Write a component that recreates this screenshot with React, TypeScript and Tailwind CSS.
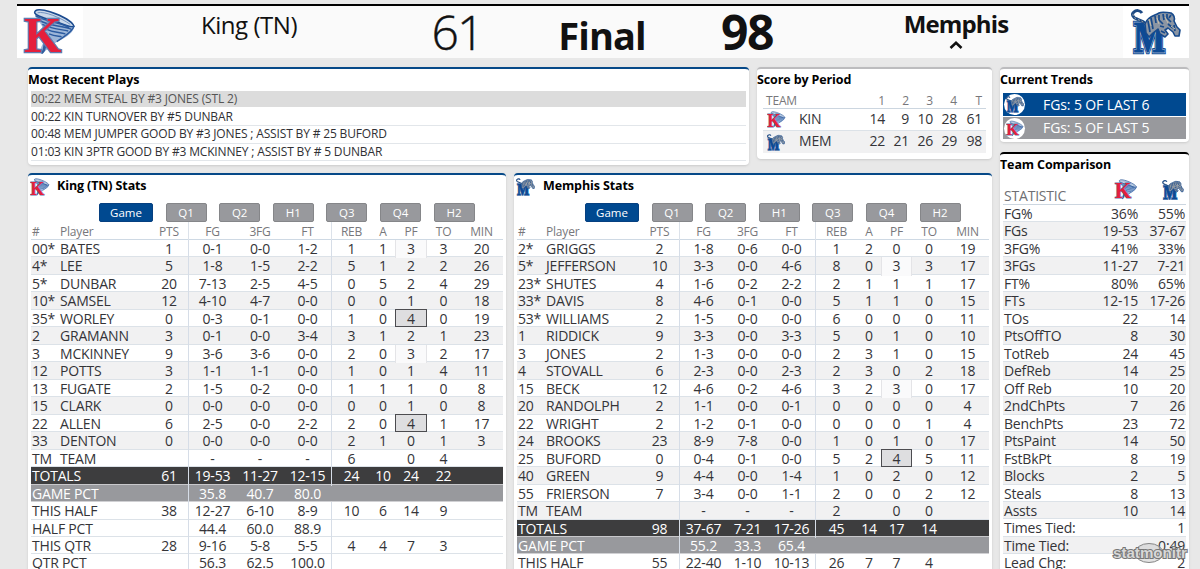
import clsx from 'clsx';
import type { ReactNode } from 'react';

const LEFT_COLS = 'grid-cols-[29px_90px_38px_48px_48px_47px_40px_24px_32px_33px_43px]';
const RIGHT_COLS = 'grid-cols-[29px_94px_39px_48px_41px_47px_42px_24px_31px_34px_43px]';

const HEADINGS = ['#', 'Player', 'PTS', 'FG', '3FG', 'FT', 'REB', 'A', 'PF', 'TO', 'MIN'];
const PERIODS = ['Q1', 'Q2', 'H1', 'Q3', 'Q4', 'H2'];

const kingPlayers = [
  ['00*', 'BATES', '1', '0-1', '0-0', '1-2', '1', '1', '3', '3', '20'],
  ['4*', 'LEE', '5', '1-8', '1-5', '2-2', '5', '1', '2', '2', '26'],
  ['5*', 'DUNBAR', '20', '7-13', '2-5', '4-5', '0', '5', '2', '4', '29'],
  ['10*', 'SAMSEL', '12', '4-10', '4-7', '0-0', '0', '0', '1', '0', '18'],
  ['35*', 'WORLEY', '0', '0-3', '0-1', '0-0', '1', '0', '4', '0', '19'],
  ['2', 'GRAMANN', '3', '0-1', '0-0', '3-4', '3', '1', '2', '1', '23'],
  ['3', 'MCKINNEY', '9', '3-6', '3-6', '0-0', '2', '0', '3', '2', '17'],
  ['12', 'POTTS', '3', '1-1', '1-1', '0-0', '1', '0', '1', '4', '11'],
  ['13', 'FUGATE', '2', '1-5', '0-2', '0-0', '1', '1', '1', '0', '8'],
  ['15', 'CLARK', '0', '0-0', '0-0', '0-0', '0', '0', '1', '0', '8'],
  ['22', 'ALLEN', '6', '2-5', '0-0', '2-2', '2', '0', '4', '1', '17'],
  ['33', 'DENTON', '0', '0-0', '0-0', '0-0', '2', '1', '0', '1', '3'],
  ['TM', 'TEAM', '', '-', '-', '-', '6', '', '0', '4', ''],
];

const kingTotals = [
  ['TOTALS', '61', '19-53', '11-27', '12-15', '24', '10', '24', '22', ''],
  ['GAME PCT', '', '35.8', '40.7', '80.0', '', '', '', '', ''],
  ['THIS HALF', '38', '12-27', '6-10', '8-9', '10', '6', '14', '9', ''],
  ['HALF PCT', '', '44.4', '60.0', '88.9', '', '', '', '', ''],
  ['THIS QTR', '28', '9-16', '5-8', '5-5', '4', '4', '7', '3', ''],
  ['QTR PCT', '', '56.3', '62.5', '100.0', '', '', '', '', ''],
];

const memphisPlayers = [
  ['2*', 'GRIGGS', '2', '1-8', '0-6', '0-0', '1', '2', '0', '0', '19'],
  ['5*', 'JEFFERSON', '10', '3-3', '0-0', '4-6', '8', '0', '3', '3', '17'],
  ['23*', 'SHUTES', '4', '1-6', '0-2', '2-2', '2', '1', '1', '1', '17'],
  ['33*', 'DAVIS', '8', '4-6', '0-1', '0-0', '5', '1', '1', '0', '15'],
  ['53*', 'WILLIAMS', '2', '1-5', '0-0', '0-0', '6', '0', '0', '0', '11'],
  ['1', 'RIDDICK', '9', '3-3', '0-0', '3-3', '5', '0', '1', '0', '10'],
  ['3', 'JONES', '2', '1-3', '0-0', '0-0', '2', '3', '1', '0', '15'],
  ['4', 'STOVALL', '6', '2-3', '0-0', '2-3', '2', '3', '0', '2', '18'],
  ['15', 'BECK', '12', '4-6', '0-2', '4-6', '3', '2', '3', '0', '17'],
  ['20', 'RANDOLPH', '2', '1-1', '0-0', '0-1', '0', '0', '0', '0', '4'],
  ['22', 'WRIGHT', '2', '1-2', '0-1', '0-0', '0', '0', '0', '1', '4'],
  ['24', 'BROOKS', '23', '8-9', '7-8', '0-0', '1', '0', '1', '0', '17'],
  ['25', 'BUFORD', '0', '0-4', '0-1', '0-0', '5', '2', '4', '5', '11'],
  ['40', 'GREEN', '9', '4-4', '0-0', '1-4', '1', '0', '2', '0', '12'],
  ['55', 'FRIERSON', '7', '3-4', '0-0', '1-1', '2', '0', '0', '2', '12'],
  ['TM', 'TEAM', '', '-', '-', '-', '2', '', '0', '0', ''],
];

const memphisTotals = [
  ['TOTALS', '98', '37-67', '7-21', '17-26', '45', '14', '17', '14', ''],
  ['GAME PCT', '', '55.2', '33.3', '65.4', '', '', '', '', ''],
  ['THIS HALF', '55', '22-40', '1-10', '10-13', '26', '7', '7', '4', ''],
];

const plays = [
  '00:22 MEM STEAL BY #3 JONES (STL 2)',
  '00:22 KIN TURNOVER BY #5 DUNBAR',
  '00:48 MEM JUMPER GOOD BY #3 JONES ; ASSIST BY # 25 BUFORD',
  '01:03 KIN 3PTR GOOD BY #3 MCKINNEY ; ASSIST BY # 5 DUNBAR',
];

const comparison = [
  ['FG%', '36%', '55%'],
  ['FGs', '19-53', '37-67'],
  ['3FG%', '41%', '33%'],
  ['3FGs', '11-27', '7-21'],
  ['FT%', '80%', '65%'],
  ['FTs', '12-15', '17-26'],
  ['TOs', '22', '14'],
  ['PtsOffTO', '8', '30'],
  ['TotReb', '24', '45'],
  ['DefReb', '14', '25'],
  ['Off Reb', '10', '20'],
  ['2ndChPts', '7', '26'],
  ['BenchPts', '23', '72'],
  ['PtsPaint', '14', '50'],
  ['FstBkPt', '8', '19'],
  ['Blocks', '2', '5'],
  ['Steals', '8', '13'],
  ['Assts', '10', '14'],
  ['Times Tied:', '', '1'],
  ['Time Tied:', '', '0:49'],
  ['Lead Chg:', '', '2'],
];

const KingLogo = ({ className }: { className: string }) => (
  <svg viewBox="0 0 56 50" className={className}>
    <path d="M12 6 C13 12 22 18 24 30 C22 36 17 41 18 47 C22 48 27 40 36 35 C46 30 53 25 53 19Z" fill="#9db6d8" />
    <path d="M12 5 C12 1 19 1 28 4 C40 8 51 14 53 19 C49 21 42 17 34 14 C24 11 14 9 12 5Z" fill="#cbd9ea" stroke="#1d4c90" strokeWidth="1.6" />
    <path d="M15 5 C22 3 39 10 49 17" fill="none" stroke="#6f90bf" strokeWidth="1" />
    <path d="M13 8 C22 14 38 15 48 20 M17 13 C27 19 39 18 50 22 M20 17 C30 22 39 22 47 24 M24 22 C32 26 38 25 44 27 M27 27 C34 30 38 29 40 30 M53 19 C51 26 40 31 35 35" fill="none" stroke="#2b5ba0" strokeWidth="1.5" />
    <path d="M18 47 C22 44 20 37 23 33 L25 37 C23 42 24 45 20 48Z" fill="#315f9f" />
    <text x="1" y="46" textLength="39" lengthAdjust="spacingAndGlyphs" fontFamily="Liberation Serif, serif" fontWeight="700" fontSize="53" fill="#e51f3c" stroke="#5f7db0" strokeWidth="2.6" paintOrder="stroke">K</text>
  </svg>
);

const TigerLogo = ({ className }: { className: string }) => (
  <svg viewBox="0 0 50 46" className={className}>
    <g fontFamily="Liberation Serif, serif" fontWeight="700" fontSize="45" fill="#0d4a94">
      <text x="3" y="43" textLength="31" lengthAdjust="spacingAndGlyphs" stroke="#0d4a94" strokeWidth="4.6" paintOrder="stroke">M</text>
      <text x="3" y="43" textLength="31" lengthAdjust="spacingAndGlyphs" stroke="#aebfd6" strokeWidth="2.4" paintOrder="stroke">M</text>
      <text x="3" y="43" textLength="31" lengthAdjust="spacingAndGlyphs" stroke="#0d4a94" strokeWidth="1.2">M</text>
    </g>
    <path d="M15 16 C13 11 9 12 6 10 C2 9 0 5 3 3 C5 1 9 1 11 4" fill="none" stroke="#1d4a85" strokeWidth="3" />
    <path d="M15 16 C11 11 9 12 6 10 C2 9 1 5 3 3" fill="none" stroke="#a5a6a4" strokeWidth="1" strokeDasharray="2 2" />
    <path d="M14 15 C16 8 23 7 28 4 C32 2 36 4 40 4 C43 6 44 9 43 12 L46 18 L49 21 L48 27 L44 27 L42 23 L37 19 L34 21 L37 25 L34 28 L29 25 L27 20 L22 24 L18 28 L15 24Z" fill="#8b95a3" stroke="#174a8c" strokeWidth="1.6" strokeLinejoin="round" />
    <path d="M17 12 L19 23 M20 9 L22 20 M24 7 L25 14 M28 6 L28 11 L32 15 M32 5 L33 11 M36 5 L36 9 L40 13 M40 6 L38 9 M29 17 L33 18 M30 22 L34 24 M37 15 L42 19 M43 16 L44 22" fill="none" stroke="#174a8c" strokeWidth="1.7" />
    <path d="M18 10 L20 17 M26 9 L28 15 M34 8 L37 14 M40 17 L44 20" fill="none" stroke="#c9c0ab" strokeWidth="1" />
  </svg>
);

interface PanelProps {
  title: string;
  className: string;
  logo?: ReactNode;
  children: ReactNode;
}

const Panel = ({ title, className, logo, children }: PanelProps) => (
  <section className={clsx('overflow-hidden rounded-[4px] border-t-2 bg-white shadow-sm', className)}>
    <h2 className="flex h-[21px] items-center text-[12.5px] leading-[21px] font-bold tracking-[-0.12px] whitespace-nowrap text-black">
      {logo}
      {title}
    </h2>
    {children}
  </section>
);

interface StatsPanelProps {
  title: string;
  logo: ReactNode;
  cols: string;
  players: string[][];
  totals: string[][];
}

const StatsPanel = ({ title, logo, cols, players, totals }: StatsPanelProps) => (
  <Panel
    title={title}
    className="h-[410px] w-[478px] border-[#064988]"
    logo={<span className="flex w-[29px] shrink-0 pt-[3px] pl-[2px]">{logo}</span>}
  >
    <div className="mt-[7px] flex h-[19px] gap-[12.6px] pl-[71px] text-[11.5px] leading-[18px] text-white">
      <button className="w-[54px] rounded-[2px] border border-[#064080] bg-[#004990]">Game</button>
      {PERIODS.map((period) => (
        <button key={period} className="w-[41px] rounded-[2px] border border-[#858689] bg-[#98999d]">
          {period}
        </button>
      ))}
    </div>
    <div className="mx-[3px] text-[14px] tracking-[-0.2px] text-[#343438]">
      <div className={clsx('grid h-[18px] border-b border-[#ced9e4] text-[12px] leading-[20px] text-[#77777b]', cols)}>
        {HEADINGS.map((heading, i) => (
          <span
            key={heading}
            className={clsx(i === 0 && 'pl-px', i > 1 && 'text-center', (i === 3 || i === 6) && 'border-l border-[#dce2ea]')}
          >
            {heading}
          </span>
        ))}
      </div>
      {players.map((row, r) => (
        <div
          key={row[1]}
          className={clsx('grid h-[17.47px] border-b border-[#dce2e8] leading-[18.4px]', cols, r % 2 === 1 && 'bg-[#f1f1f2]')}
        >
          {row.map((cell, i) => (
            <span
              key={i}
              className={clsx(
                'whitespace-nowrap',
                i === 0 && 'pl-px',
                i > 1 && 'text-center',
                (i === 3 || i === 6) && 'border-l border-[#d6dde7]',
                i === 8 && cell === '3' && 'border-x border-[#e4e4e7] bg-[#fafafb]',
                i === 8 && cell === '4' && '-mt-px h-[18.4px] border border-[#4c4c50] bg-[#dedee0] leading-[17.5px]',
              )}
            >
              {cell}
            </span>
          ))}
        </div>
      ))}
      {totals.map((row, r) => (
        <div
          key={row[0]}
          className={clsx(
            'grid h-[17.47px] border-b leading-[18.4px]',
            cols,
            r === 0 && 'border-[#c8c8cb] bg-[#3d3d3e] text-white',
            r === 1 && 'border-[#d0d0d3] bg-[#98999d] text-white',
            r > 1 && 'border-[#dce2e8]',
          )}
        >
          {row.map((cell, i) => (
            <span
              key={i}
              className={clsx(
                'whitespace-nowrap',
                i === 0 ? 'col-span-2 pl-px' : 'text-center',
                i === 2 && 'border-l border-[#d6dde7]',
                i === 5 && (r === 1 ? 'border-l border-transparent' : 'border-l border-[#d6dde7]'),
              )}
            >
              {cell}
            </span>
          ))}
        </div>
      ))}
    </div>
  </Panel>
);

const ScoreByPeriod = () => (
  <Panel title="Score by Period" className="h-[92px] w-[235px] border-[#bcbcbe]">
    <div className="mx-[6px] text-[14px] tracking-[-0.2px] text-[#343438]">
      <div className="grid h-[19px] grid-cols-[98px_24px_24px_24px_24px_25px] border-b border-[#ccd6e0] pt-[2px] text-right text-[12px] leading-[18px] text-[#77777b]">
        <span className="pl-[3px] text-left">TEAM</span>
        <span>1</span>
        <span>2</span>
        <span>3</span>
        <span>4</span>
        <span>T</span>
      </div>
      {[
        ['KIN', '14', '9', '10', '28', '61'],
        ['MEM', '22', '21', '26', '29', '98'],
      ].map(([team, ...scores], r) => (
        <div
          key={team}
          className={clsx(
            'grid h-[22px] grid-cols-[36px_62px_24px_24px_24px_24px_25px] leading-[20px]',
            r === 0 ? 'border-b border-[#dce2e8]' : 'bg-[#f1f1f2]',
          )}
        >
          <span className="flex items-center pl-[4px]">
            {r === 0 ? <KingLogo className="h-[17px] w-[19px]" /> : <TigerLogo className="h-[17px] w-[18px]" />}
          </span>
          <span>{team}</span>
          {scores.map((score, i) => (
            <span key={i} className="text-right">{score}</span>
          ))}
        </div>
      ))}
    </div>
  </Panel>
);

const TeamComparison = () => (
  <Panel title="Team Comparison" className="h-[430px] w-[189px] border-black">
    <div className="mx-[3px] text-[14px] tracking-[-0.2px] whitespace-nowrap text-[#343438]">
      <div className="grid h-[30px] grid-cols-[98px_47px_38px] items-end border-b border-[#ccd6e0]">
        <span className="pl-px leading-[17px] text-[#6f6f73]">STATISTIC</span>
        <KingLogo className="mb-[4px] ml-[13px] h-[21px] w-[24px]" />
        <TigerLogo className="mb-[4px] ml-[14px] h-[20px] w-[22px]" />
      </div>
      {comparison.map(([name, king, memphis], r) => (
        <div
          key={name}
          className={clsx(
            'grid h-[17.48px] grid-cols-[83px_52px_47px] border-b border-[#dce2e8] leading-[18.4px]',
            r % 2 === 1 && 'bg-[#f1f1f2]',
          )}
        >
          <span className="pl-px">{name}</span>
          <span className="text-right">{king}</span>
          <span className="text-right">{memphis}</span>
        </div>
      ))}
    </div>
  </Panel>
);

const App = () => {
  return (
    <div className="relative h-[569px] w-[1200px] overflow-hidden bg-[#e8e8e8] pt-[4px] pl-[17px] font-['Open_Sans','Noto_Sans',sans-serif]">
      <header className="flex h-[54px] w-[1172px] border-t-2 border-black bg-[#fafafa] text-[#111]">
        <div className="flex w-[66px] justify-center bg-white pt-[2px]">
          <KingLogo className="h-[48px] w-[54px]" />
        </div>
        <div className="w-[332px] text-center text-[24px] leading-[37px] tracking-[-0.45px]">King (TN)</div>
        <div className="w-[84px] text-center text-[48px] leading-[52px] font-light tracking-[-2px] [-webkit-text-stroke:0.4px_#111]">61</div>
        <div className="w-[206px] text-center text-[38px] leading-[58px] font-bold tracking-[-0.9px]">Final</div>
        <div className="w-[84px] text-center text-[48px] leading-[52px] font-bold tracking-[-1.5px]">98</div>
        <div className="flex w-[334px] flex-col items-center text-[24px] leading-[36px] font-bold tracking-[-0.85px]">
          Memphis
          <svg viewBox="0 0 14 8" className="-mt-[1px] h-[8px] w-[14px]">
            <path d="M1.5 7 L7 1.8 L12.5 7" fill="none" stroke="#111" strokeWidth="2.6" />
          </svg>
        </div>
        <div className="flex w-[66px] justify-center bg-white pt-[3px]">
          <TigerLogo className="h-[46px] w-[50px]" />
        </div>
      </header>

      <main className="flex gap-[8px] pt-[9px] pl-[11px]">
        <div className="w-[964px]">
          <div className="flex h-[106px] items-start gap-[8px]">
            <Panel title="Most Recent Plays" className="h-[98px] w-[721px] border-[#064988]">
              <div className="mx-[3px] pt-[1px] text-[12px] leading-[16px] tracking-[-0.16px] text-[#303034]">
                {plays.map((play, i) => (
                  <div
                    key={play}
                    className={clsx(
                      'h-[17.5px] border-b',
                      i === 0 ? 'border-b-2 border-white bg-[#dcdcdc] text-[#555]' : 'border-[#e2e6ea]',
                    )}
                  >
                    {play}
                  </div>
                ))}
              </div>
            </Panel>
            <ScoreByPeriod />
          </div>
          <div className="flex gap-[8px]">
            <StatsPanel
              title="King (TN) Stats"
              logo={<KingLogo className="h-[18px] w-[20px]" />}
              cols={LEFT_COLS}
              players={kingPlayers}
              totals={kingTotals}
            />
            <StatsPanel
              title="Memphis Stats"
              logo={<TigerLogo className="h-[18px] w-[19px]" />}
              cols={RIGHT_COLS}
              players={memphisPlayers}
              totals={memphisTotals}
            />
          </div>
        </div>

        <aside className="flex w-[189px] flex-col gap-[10px]">
          <Panel title="Current Trends" className="h-[75px] w-[189px] border-[#bcbcbe]">
            <div className="mx-[3px] mt-[3px] flex flex-col gap-px text-[14px] leading-[22px] tracking-[-0.1px] text-white">
              <div className="flex h-[23px] items-center bg-[#004990]">
                <span className="mr-[18px] ml-[1px] flex size-[21px] items-center justify-center rounded-full bg-white">
                  <TigerLogo className="h-[17px] w-[18px]" />
                </span>
                FGs: 5 OF LAST 6
              </div>
              <div className="flex h-[22px] items-center bg-[#98999d]">
                <span className="mr-[18px] ml-[1px] flex size-[21px] items-center justify-center rounded-full bg-white">
                  <KingLogo className="h-[17px] w-[18px]" />
                </span>
                FGs: 5 OF LAST 5
              </div>
            </div>
          </Panel>
          <TeamComparison />
        </aside>
      </main>

      <div className="absolute top-[543px] left-[1111px] h-[20px] w-[78px]">
        <svg viewBox="0 0 78 20" className="h-[20px] w-[78px]">
          <ellipse cx="38" cy="10" rx="14" ry="9.5" fill="#c8c8c8" fillOpacity="0.5" stroke="#858585" />
          <text x="2" y="15" textLength="74" lengthAdjust="spacingAndGlyphs" fontFamily="Liberation Sans, sans-serif" fontWeight="700" fontSize="14.5" fill="#d8d8d8" stroke="#777" strokeWidth="2" paintOrder="stroke">
            statmonitr
          </text>
        </svg>
      </div>
    </div>
  );
};

export default App;
